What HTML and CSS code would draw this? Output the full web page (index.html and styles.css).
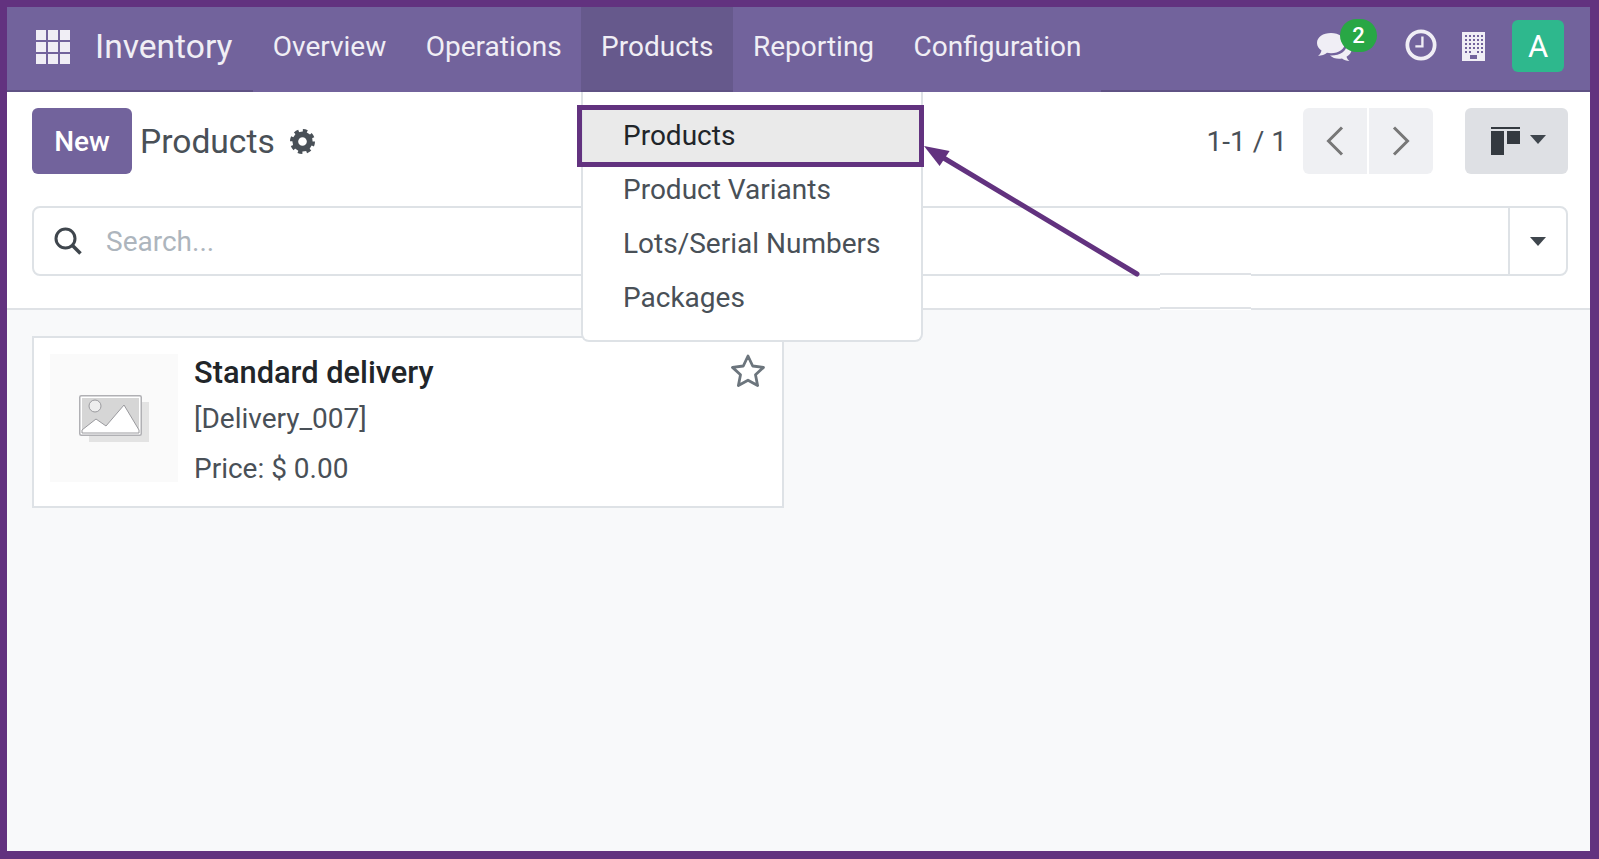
FILE: index.html
```html
<!DOCTYPE html>
<html lang="en">
<head>
<meta charset="utf-8">
<title>Inventory - Products</title>
<link rel="stylesheet" href="styles.css">
</head>
<body>
<div class="frame">
  <header class="navbar">
    <div class="brand">
      <div class="apps"><i></i><i></i><i></i><i></i><i></i><i></i><i></i><i></i><i></i></div>
      <span class="brand-name">Inventory</span>
    </div>
    <a class="nav-item">Overview</a>
    <a class="nav-item">Operations</a>
    <a class="nav-item active">Products</a>
    <a class="nav-item">Reporting</a>
    <a class="nav-item">Configuration</a>
    <div class="systray">
      <div class="chat">
        <svg class="chat-icon" viewBox="0 0 38 30" width="38" height="30"><path class="ic-fill" d="M15 1C7 1 1 5 1 11c0 3 1.800 5.800 4.500 7.500C5 21 3.500 22.800 2 24c3.500-.3 7-1.500 9-3.200 1.300.3 2.600.4 4 .4 8 0 14-4.500 14-10.200S23 1 15 1z"/><path class="ic-fill" d="M31 12c0 7-7 11.500-15.500 11.500-.6 0-1 0-1.500-.1 2 2 5.500 3.300 9 3.300 1 0 2-.1 3-.3 1.800 1.300 4.500 2.300 7.500 2.600-1.300-1-2.500-2.600-3-4.300 3-1.500 5-4.200 5-7.200 0-2.700-1.600-5-4.500-6.800-.3.600 0 .9 0 1.300z"/></svg>
        <span class="badge">2</span>
      </div>
      <svg class="clock" viewBox="0 0 34 34" width="32" height="32"><circle cx="17" cy="17" r="14.500" fill="none" stroke="#f0eef5" stroke-width="4"/><path d="M18.500 8v10.500H11" fill="none" stroke="#f0eef5" stroke-width="2.500"/></svg>
      <svg class="building" viewBox="0 0 23 29" width="23" height="29"><rect width="23" height="29" fill="#f0eef5"/><g fill="#72639c"><rect x="3" y="3" width="2" height="2"/><rect x="7" y="3" width="2" height="2"/><rect x="11" y="3" width="2" height="2"/><rect x="15" y="3" width="2" height="2"/><rect x="19" y="3" width="2" height="2"/><rect x="3" y="7" width="2" height="2"/><rect x="7" y="7" width="2" height="2"/><rect x="11" y="7" width="2" height="2"/><rect x="15" y="7" width="2" height="2"/><rect x="19" y="7" width="2" height="2"/><rect x="3" y="11" width="2" height="2"/><rect x="7" y="11" width="2" height="2"/><rect x="11" y="11" width="2" height="2"/><rect x="15" y="11" width="2" height="2"/><rect x="19" y="11" width="2" height="2"/><rect x="3" y="15" width="2" height="2"/><rect x="7" y="15" width="2" height="2"/><rect x="11" y="15" width="2" height="2"/><rect x="15" y="15" width="2" height="2"/><rect x="19" y="15" width="2" height="2"/><rect x="3" y="19" width="2" height="2"/><rect x="7" y="19" width="2" height="2"/><rect x="15" y="19" width="2" height="2"/><rect x="19" y="19" width="2" height="2"/><rect x="8" y="23" width="7" height="4"/></g></svg>
      <div class="avatar">A</div>
    </div>
  </header>

  <section class="panel">
    <div class="panel-top">
      <button class="btn-new">New</button>
      <span class="title">Products</span>
      <svg class="gear" viewBox="0 0 26 26" width="25" height="25"><circle cx="13" cy="13" r="7.500" fill="none" stroke="#495057" stroke-width="6"/><circle cx="13" cy="13" r="10.500" fill="none" stroke="#495057" stroke-width="5" stroke-dasharray="4.250 4"/></svg>
      <div class="pager">
        <span class="pager-text">1-1 / 1</span>
        <div class="pager-btns">
          <button class="pager-btn"><svg viewBox="0 0 18 30" width="18" height="30"><path d="M16 1.500 2.500 15 16 28.500" fill="none" stroke="#777" stroke-width="3"/></svg></button>
          <button class="pager-btn"><svg viewBox="0 0 18 30" width="18" height="30"><path d="M2 1.500 15.500 15 2 28.500" fill="none" stroke="#777" stroke-width="3"/></svg></button>
        </div>
      </div>
      <button class="view-btn">
        <svg viewBox="0 0 29 28" width="29" height="28"><g fill="#343a40"><rect width="29" height="2"/><rect y="4" width="13" height="24"/><rect x="16" y="4" width="13" height="13"/></g></svg>
        <span class="caret"></span>
      </button>
    </div>
    <div class="search">
      <svg class="search-icon" viewBox="0 0 28 28" width="28" height="28"><circle cx="11.500" cy="11.500" r="9.500" fill="none" stroke="#3f464d" stroke-width="3"/><path d="M18.500 18.500 26.500 26.500" stroke="#3f464d" stroke-width="3.500"/></svg>
      <span class="placeholder">Search...</span>
      <div class="search-toggle"><span class="caret"></span></div>
    </div>
  </section>

  <main class="content">
    <article class="card">
      <div class="thumb">
        <svg viewBox="0 0 70 47" width="70" height="47"><rect x="10" y="7" width="60" height="40" fill="#e3e3e3"/><rect x=".75" y=".75" width="61.500" height="39.500" rx="1.500" fill="#fff" stroke="#b0b0b4" stroke-width="1.500"/><rect x="3" y="3" width="57" height="35" fill="#d6d6d6"/><path d="M3 35 17 24l10 7 18-21 15 25v3H3z" fill="#fff" stroke="#9a9a9e"/><circle cx="16" cy="11" r="6" fill="#eee" stroke="#9a9a9e"/></svg>
      </div>
      <div class="card-body">
        <strong class="card-name">Standard delivery</strong>
        <span class="card-code">[Delivery_007]</span>
        <span class="card-price">Price: $ 0.00</span>
      </div>
      <svg class="star" viewBox="0 0 36 35" width="36" height="35"><path d="M18 3l4.700 10 10.800 1.400-8 7.400 2.100 10.700L18 27.200 8.400 32.500l2.100-10.700-8-7.400L13.300 13z" fill="none" stroke="#6c757d" stroke-width="2.800" stroke-linejoin="round"/></svg>
    </article>
  </main>

  <nav class="menu">
    <a class="menu-item current">Products</a>
    <a class="menu-item">Product Variants</a>
    <a class="menu-item">Lots/Serial Numbers</a>
    <a class="menu-item">Packages</a>
  </nav>
  <div class="callout"></div>
  <svg class="arrow" viewBox="0 0 240 150" width="240" height="150"><path d="M226 132 26 12" stroke="#62327f" stroke-width="5" stroke-linecap="round"/><path d="M13 4 38.600 9 28.600 24z" fill="#62327f"/></svg>
  <div class="patch patch-search"></div>
  <div class="patch patch-panel"></div>
</div>
</body>
</html>
```

FILE: styles.css
```css
* { box-sizing: border-box; }
html, body { margin: 0; height: 100%; }
body { font-family: Roboto, "Liberation Sans", sans-serif; font-size: 28px; color: #495057; }
.frame { position: relative; height: 859px; width: 1599px; border: solid #62327f; border-width: 7px 9px 8px 7px; display: flex; flex-direction: column; background: #f8f9fa; overflow: hidden; }

.navbar { display: flex; height: 85px; background: #72639c; color: #f0eef5; flex: none; }
.brand { display: flex; align-items: center; width: 246px; padding: 0 0 4px 29px; border-bottom: 2px solid #5f5284; }
.apps { display: grid; grid-template-columns: repeat(3, 10px); grid-auto-rows: 10px; gap: 2px; }
.apps i { background: #f0eef5; }
.brand-name { font-size: 33.600px; margin-left: 25px; }
.nav-item { display: flex; align-items: center; padding: 0 19.750px 6px; }
.nav-item.active { background: #66598c; border-bottom: 2px solid #5f5284; padding-bottom: 4px; }
.systray { flex: 1; display: flex; align-items: center; justify-content: flex-end; border-bottom: 2px solid #5f5284; padding: 0 26px 4px 0; }
.chat { width: 38px; height: 30px; position: relative; }
.chat-icon { display: block; }
.ic-fill { fill: #f0eef5; }
.badge { position: absolute; left: 24px; top: -13px; width: 37px; height: 33px; border-radius: 17px; background: #28a745; color: #fff; font-size: 22px; font-weight: 500; display: flex; align-items: center; justify-content: center; }
.clock { margin: -3px 0 0 51px; }
.building { margin-left: 25px; }
.avatar { margin: -1px 0 0 27px; width: 52px; height: 52px; border-radius: 6px; background: #2eb88d; color: #fff; font-size: 31px; display: flex; align-items: center; justify-content: center; }

.panel { background: #fff; padding: 16px 22px 32px 25px; border-bottom: 2px solid #dfe2e6; flex: none; }
.panel-top { display: flex; align-items: center; height: 66px; }
.btn-new { width: 100px; height: 66px; border: 0; border-radius: 6px; background: #72639c; color: #fff; font: 500 28px Roboto, sans-serif; }
.title { font-size: 33.600px; margin-left: 8px; }
.gear { margin-left: 15px; }
.pager { margin-left: auto; display: flex; align-items: center; }
.pager-text { margin-right: 16px; }
.pager-btns { display: flex; gap: 2px; }
.pager-btn { width: 64px; height: 66px; border: 0; background: #eff0f3; padding: 0; display: flex; align-items: center; justify-content: center; }
.pager-btn:first-child { border-radius: 6px 0 0 6px; }
.pager-btn:last-child { border-radius: 0 6px 6px 0; }
.view-btn { margin-left: 32px; width: 103px; height: 66px; border: 0; border-radius: 6px; background: #dee0e4; display: flex; align-items: center; padding: 0 0 0 26px; }
.view-btn .caret { margin-left: 10px; margin-top: -3px; }
.caret { display: block; width: 0; height: 0; border: solid transparent; border-width: 9px 8px 0; border-top-color: #3f464d; }

.search { display: flex; align-items: center; height: 70px; margin-top: 32px; border: 2px solid #dee2e6; border-radius: 8px; }
.search-icon { margin-left: 20px; }
.placeholder { margin-left: 24px; color: #adb5bd; }
.search-toggle { margin-left: auto; width: 58px; height: 100%; border-left: 2px solid #dee2e6; display: flex; align-items: center; justify-content: center; }

.content { flex: 1; padding: 26px 25px; }
.card { position: relative; display: flex; width: 752px; height: 172px; background: #fff; border: 2px solid #dee2e6; padding: 16px; }
.thumb { width: 128px; height: 128px; background: #fafafa; display: flex; align-items: center; justify-content: center; flex: none; }
.card-body { display: flex; flex-direction: column; margin-left: 16px; margin-top: -3px; }
.card-name { font-size: 30.800px; font-weight: 500; color: #212529; line-height: 44px; }
.card-code { line-height: 48px; }
.card-price { line-height: 52px; }
.star { position: absolute; right: 16px; top: 15px; }

.menu { position: absolute; left: 574px; top: 85px; width: 342px; height: 250px; background: #fff; border: 2px solid #dee2e6; border-top: 0; border-radius: 0 0 8px 8px; padding: 16px 0; display: flex; flex-direction: column; }
.menu-item { height: 54px; padding-left: 40px; display: flex; align-items: center; flex: none; }
.menu-item.current { background: #eaeaea; color: #212529; }
.callout { position: absolute; left: 570px; top: 98px; width: 347px; height: 62px; border: 5px solid #62327f; }
.arrow { position: absolute; left: 904px; top: 135px; overflow: visible; }
.patch { position: absolute; left: 1153px; width: 91px; height: 3px; background: #dfe2e6; border-bottom: 1px solid #fff; }
.patch-search { top: 266px; }
.patch-panel { top: 300px; }
```
